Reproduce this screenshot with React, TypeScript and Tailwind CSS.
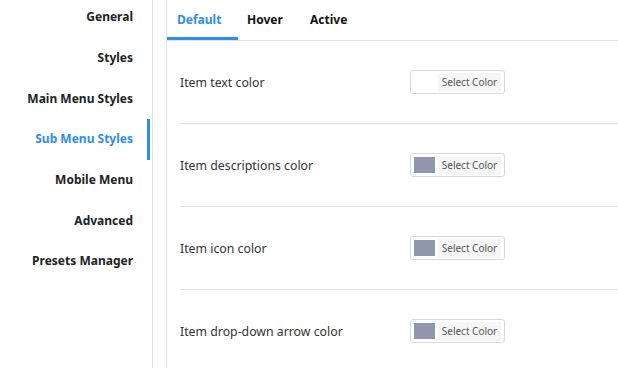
import React from 'react';

const menu = [
  'General',
  'Styles',
  'Main Menu Styles',
  'Sub Menu Styles',
  'Mobile Menu',
  'Advanced',
  'Presets Manager',
];

const rows = [
  { label: 'Item text color', color: '#ffffff' },
  { label: 'Item descriptions color', color: '#8f96ae' },
  { label: 'Item icon color', color: '#8f96ae' },
  { label: 'Item drop-down arrow color', color: '#8f96ae' },
];

function ColorButton({ color }: { color: string }) {
  return (
    <button className="flex h-[24px] w-[95px] items-center gap-[3px] rounded-[3px] border border-[#d9d9d9] bg-white pl-[3px] pr-[3px]">
      <span className="h-[16px] w-[21px]" style={{ backgroundColor: color }} />
      <span className="flex h-[19px] flex-1 items-center justify-center bg-[#f6f6f6] text-[10px] text-[#555]">
        Select Color
      </span>
    </button>
  );
}

export default function App() {
  const active = 'Sub Menu Styles';

  return (
    <div className="flex h-[368px] w-[618px] overflow-hidden bg-white font-['Noto_Sans',sans-serif]">
      {/* Sidebar */}
      <aside className="w-[153px] shrink-0 border-r border-[#e3e3e3]">
        <ul className="-mt-[3px]">
          {menu.map((item) => (
            <li
              key={item}
              className={`relative flex h-[40.67px] items-center justify-end pr-[19px] text-[12px] font-bold ${
                item === active ? 'text-[#2f8cf4]' : 'text-[#222]'
              }`}
            >
              {item}
              {item === active && <span className="absolute bottom-0 right-[2px] top-0 w-[3px] bg-[#2f8cf4]" />}
            </li>
          ))}
        </ul>
      </aside>

      {/* Main panel */}
      <main className="ml-[13px] flex-1 border-l border-[#e3e3e3]">
        <div className="flex h-[41px] border-b border-[#e3e3e3] text-[12px] font-bold">
          <div className="relative flex w-[71px] items-center pl-[10px] text-[#2f8cf4]">
            Default
            <span className="absolute bottom-0 left-0 right-0 h-[3px] bg-[#2f8cf4]" />
          </div>
          <div className="flex w-[63px] items-center pl-[9px] text-[#111]">Hover</div>
          <div className="flex w-[63px] items-center pl-[9px] text-[#111]">Active</div>
        </div>

        <div className="ml-[13px]">
          {rows.map((row) => (
            <div key={row.label} className="flex h-[83px] items-center border-b border-[#e3e3e3]">
              <span className="w-[230px] pt-[2px] text-[12.3px] text-[#333]">{row.label}</span>
              <ColorButton color={row.color} />
            </div>
          ))}
        </div>
      </main>
    </div>
  );
}
